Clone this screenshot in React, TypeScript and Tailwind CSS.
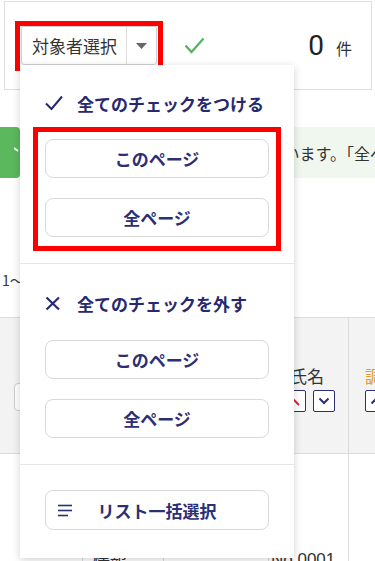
import React from "react";

const NAVY = "#262970";

function MenuButton({ children }: { children: React.ReactNode }) {
  return (
    <div className="h-[39px] rounded-[8px] border border-[#d9d9d9] bg-white flex items-center justify-center text-[17px] font-bold text-[#2c2f74] leading-none">
      {children}
    </div>
  );
}

export default function App() {
  return (
    <div className="relative w-[375px] h-[561px] overflow-hidden bg-white font-['Noto_Sans_CJK_JP',sans-serif] text-[#333]">
      {/* top panel */}
      <div className="ml-[4px] mr-[3px] mt-[1px] h-[89px] border border-[#dedede] bg-white flex items-center pl-[16px] pr-[19px]">
        <div className="relative">
          <div className="flex h-[39px] w-[136px] border border-[#cfcfcf] rounded-[3px] bg-white">
            <div className="flex-1 flex items-center pl-[10px] text-[17px] text-[#333] leading-none">対象者選択</div>
            <div className="w-[30px] border-l border-[#dcdcdc] flex items-center justify-center">
              <svg width="11" height="6" viewBox="0 0 11 6">
                <path d="M0 0h11L5.5 6z" fill="#666" />
              </svg>
            </div>
          </div>
          <div className="absolute -left-[6px] -right-[6px] -top-[5px] -bottom-[6px] border-[5px] border-[#ff0000]" />
        </div>
        <svg className="ml-[27px]" width="21" height="17" viewBox="0 0 21 17">
          <polyline points="1.5,8.5 7.5,15 19.5,1.5" fill="none" stroke="#4fb564" strokeWidth="2.2" />
        </svg>
        <div className="ml-auto flex items-baseline">
          <span className="text-[28px] font-['Roboto',sans-serif] text-[#222]">0</span>
          <span className="ml-[12px] text-[16px] text-[#333]">件</span>
        </div>
      </div>

      {/* banner */}
      <div className="mt-[37px] h-[51px] flex">
        <div className="w-[20px] bg-[#5cb85c] rounded-r-[4px] flex items-center justify-end">
          <svg width="6" height="8" viewBox="0 0 6 8" className="-mt-[10px]">
            <polyline points="0,4 4,7" fill="none" stroke="#fff" strokeWidth="2" />
          </svg>
        </div>
        <div className="flex-1 bg-[#eff7ef] flex items-center pl-[8px] whitespace-nowrap overflow-hidden text-[16px] text-[#333]">
          現在チェックした対象者を選択しています。「全ページ」
        </div>
      </div>

      {/* count */}
      <div className="mt-[92px] pl-[2px] text-[14px] leading-[20px] text-[#333]">1〜0件</div>

      {/* table header */}
      <div className="mt-[27px] h-[137px] border-y border-[#dcdcdc] bg-[#f3f3f3] flex">
        <div className="w-[268px]">
          <div className="ml-[14px] mt-[65px] w-[60px] h-[28px] rounded-[4px] border border-[#cccccc] bg-white" />
        </div>
        <div className="w-[81px] border-r border-[#dcdcdc] pt-[46px]">
          <div className="pl-[22px] text-[17px] leading-[24px] text-[#333]">氏名</div>
          <div className="mt-[2px] pl-[16px] flex gap-[7px]">
            <div className="w-[22px] h-[22px] border-[1.5px] border-[#2c2f74] rounded-[2px] bg-white flex items-center justify-center">
              <svg width="14" height="14" viewBox="0 0 14 14">
                <line x1="3" y1="3" x2="11" y2="11" stroke="#e0202a" strokeWidth="2" />
              </svg>
            </div>
            <div className="w-[22px] h-[22px] border-[1.5px] border-[#2c2f74] rounded-[2px] bg-white flex items-center justify-center">
              <svg width="12" height="8" viewBox="0 0 12 8">
                <polyline points="1.5,1.5 6,6 10.5,1.5" fill="none" stroke="#2c2f74" strokeWidth="2" />
              </svg>
            </div>
          </div>
        </div>
        <div className="flex-1 pt-[46px] pl-[16px] overflow-hidden">
          <div className="text-[17px] leading-[24px] text-[#e39a2b] whitespace-nowrap">調査</div>
          <div className="mt-[2px] w-[22px] h-[22px] border-[1.5px] border-[#2c2f74] rounded-[2px] bg-white flex items-center justify-center">
            <svg width="12" height="8" viewBox="0 0 12 8">
              <polyline points="1.5,6.5 6,2 10.5,6.5" fill="none" stroke="#2c2f74" strokeWidth="2" />
            </svg>
          </div>
        </div>
      </div>

      {/* table body */}
      <div className="flex h-[120px]">
        <div className="w-[349px] border-r border-[#dcdcdc] pt-[94px]">
          <div className="flex h-[30px] text-[17px] leading-[24px] text-[#333]">
            <div className="w-[82px]" />
            <div className="w-[81px] border-l border-[#dcdcdc] pl-[10px] pt-[2px]">情報</div>
            <div className="w-[105px] border-l border-[#dcdcdc]" />
            <div className="flex-1 border-l border-[#dcdcdc] font-['Liberation_Sans',sans-serif] whitespace-nowrap pl-[2px]">No.0001</div>
          </div>
        </div>
        <div className="flex-1" />
      </div>

      {/* dropdown menu */}
      <div className="absolute left-[20px] top-[65px] w-[274px] bg-white shadow-[0_2px_8px_rgba(0,0,0,0.18)]">
        <div className="px-[25px] pt-[26px] pb-[26px]">
          <div className="flex items-center h-[24px]">
            <svg width="18" height="16" viewBox="0 0 18 16">
              <polyline points="1,8.5 6.5,14 17,1.5" fill="none" stroke={NAVY} strokeWidth="2" />
            </svg>
            <span className="ml-[14px] text-[17px] font-bold leading-none" style={{ color: NAVY }}>全てのチェックをつける</span>
          </div>
          <div className="relative mt-[24px] flex flex-col gap-[20px]">
            <MenuButton>このページ</MenuButton>
            <MenuButton>全ページ</MenuButton>
            <div className="absolute -left-[12px] -right-[12px] -top-[12px] -bottom-[14px] border-[5px] border-[#ff0000]" />
          </div>
        </div>
        <div className="border-t border-[#e6e6e6]" />
        <div className="px-[25px] pt-[27px] pb-[26px]">
          <div className="flex items-center h-[24px]">
            <svg width="16" height="15" viewBox="0 0 16 15">
              <line x1="1.5" y1="1.5" x2="14" y2="13.5" stroke={NAVY} strokeWidth="2.2" />
              <line x1="14" y1="1.5" x2="1.5" y2="13.5" stroke={NAVY} strokeWidth="2.2" />
            </svg>
            <span className="ml-[16px] text-[17px] font-bold leading-none" style={{ color: NAVY }}>全てのチェックを外す</span>
          </div>
          <div className="mt-[25px] flex flex-col gap-[20px]">
            <MenuButton>このページ</MenuButton>
            <MenuButton>全ページ</MenuButton>
          </div>
        </div>
        <div className="border-t border-[#e6e6e6]" />
        <div className="px-[25px] pt-[25px] pb-[28px]">
          <div className="relative h-[40px] rounded-[8px] border border-[#d9d9d9] bg-white flex items-center justify-center text-[17px] font-bold text-[#2c2f74] leading-none">
            <svg className="absolute left-[12px] top-[13px]" width="15" height="13" viewBox="0 0 15 13">
              <line x1="0" y1="1.5" x2="14" y2="1.5" stroke="#2c2f74" strokeWidth="1.6" />
              <line x1="0" y1="6.5" x2="14" y2="6.5" stroke="#2c2f74" strokeWidth="1.6" />
              <line x1="0" y1="11.5" x2="10" y2="11.5" stroke="#2c2f74" strokeWidth="1.6" />
            </svg>
            リスト一括選択
          </div>
        </div>
      </div>
    </div>
  );
}
